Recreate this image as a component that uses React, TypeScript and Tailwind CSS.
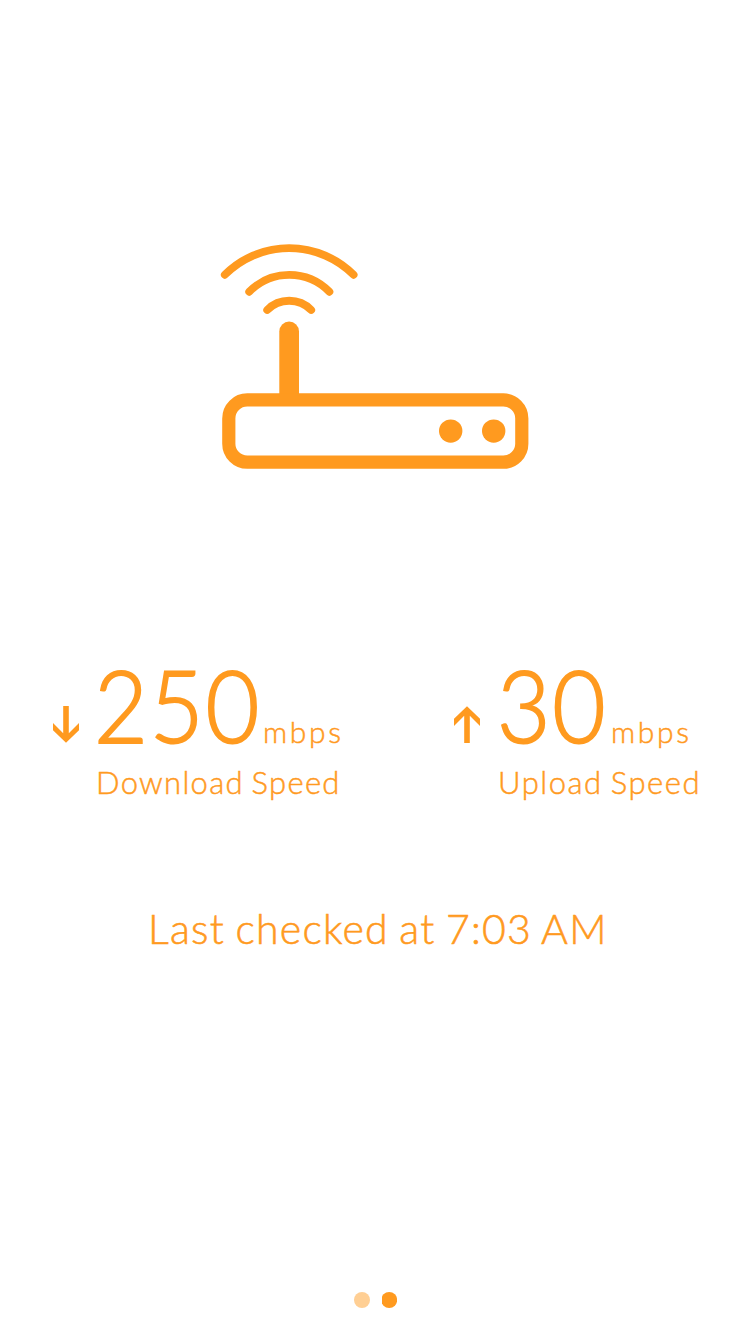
function RouterIcon() {
  return (
    <svg className="block h-[228px] w-[310px]" viewBox="220 243 310 228" fill="none" stroke="#ff9a1f">
      <g strokeWidth="7.8" strokeLinecap="round">
        <path d="M224.8 274.8A91 91 0 0 1 353.6 274.8" />
        <path d="M249.2 291.8A56 56 0 0 1 329.4 291.8" />
        <path d="M267.2 309.9A31 31 0 0 1 311.2 309.9" />
      </g>
      <path d="M279.3 400V331.4a9.85 9.85 0 0 1 19.7 0V400z" fill="#ff9a1f" stroke="none" />
      <rect x="228.8" y="399.9" width="293" height="62.3" rx="18.5" strokeWidth="13.2" />
      <g fill="#ff9a1f" stroke="none">
        <circle cx="450.7" cy="431.1" r="11.7" />
        <circle cx="493.7" cy="431.1" r="11.7" />
      </g>
    </svg>
  );
}

function Arrow({ up = false }: { up?: boolean }) {
  return (
    <svg className="mt-[46px] block h-[37px] w-[26px] shrink-0" viewBox="0 0 26 37" fill="#ff9a1f">
      <path
        transform={up ? "rotate(180 13 18.5)" : undefined}
        d="M10.2 0h5.6v27.2L26 17v7.2L13 36.8 0 24.2V17l10.2 10.2z"
      />
    </svg>
  );
}

export default function App() {
  return (
    <main className="flex h-[1331px] w-[750px] flex-col bg-white font-['Lato',sans-serif] font-light text-[#ff9a1f]">
      <div className="mt-[243px] ml-[220px]">
        <RouterIcon />
      </div>

      <section className="mt-[189px] flex h-[150px] whitespace-nowrap">
        <div className="flex w-[401px] pl-[53px]">
          <Arrow />
          <div className="ml-[14px]">
            <div className="flex h-[100px] items-baseline">
              <span className="ml-[1px] w-[169px] origin-left scale-x-[0.93] text-[100px] leading-[88px] tracking-[2px] [-webkit-text-stroke:2px_#ff9a1f]">250</span>
              <span className="text-[30px] leading-[32px] tracking-[2.7px] [-webkit-text-stroke:0.5px_#ff9a1f]">mbps</span>
            </div>
            <div className="ml-[3px] text-[31px] leading-[44px] tracking-[1.3px] [word-spacing:-2px] [-webkit-text-stroke:0.5px_#ff9a1f]">Download Speed</div>
          </div>
        </div>
        <div className="flex pl-[53px]">
          <Arrow up />
          <div className="ml-[14px]">
            <div className="flex h-[100px] items-baseline">
              <span className="ml-[3px] w-[114px] origin-left scale-x-[0.92] text-[100px] leading-[88px] tracking-[2px] [-webkit-text-stroke:2px_#ff9a1f]">30</span>
              <span className="text-[30px] leading-[32px] tracking-[2.7px] [-webkit-text-stroke:0.5px_#ff9a1f]">mbps</span>
            </div>
            <div className="ml-[4px] text-[31px] leading-[44px] tracking-[1.55px] [word-spacing:-2px] [-webkit-text-stroke:0.5px_#ff9a1f]">Upload Speed</div>
          </div>
        </div>
      </section>

      <p className="mt-[94px] ml-[148px] text-[41px] leading-[50px] tracking-[1.25px] whitespace-nowrap [word-spacing:-2px] [-webkit-text-stroke:0.6px_#ff9a1f]">
        Last checked at 7:03 AM
      </p>

      <div className="mt-auto mb-[23px] ml-[354px] flex gap-[12px]">
        <span className="size-4 rounded-full bg-[#ffcf94]" />
        <svg className="block h-4 w-[15px]" viewBox="0 0 15 16" fill="#ff9a1f">
          <circle cx="7.2" cy="8" r="8" />
        </svg>
      </div>
    </main>
  );
}
